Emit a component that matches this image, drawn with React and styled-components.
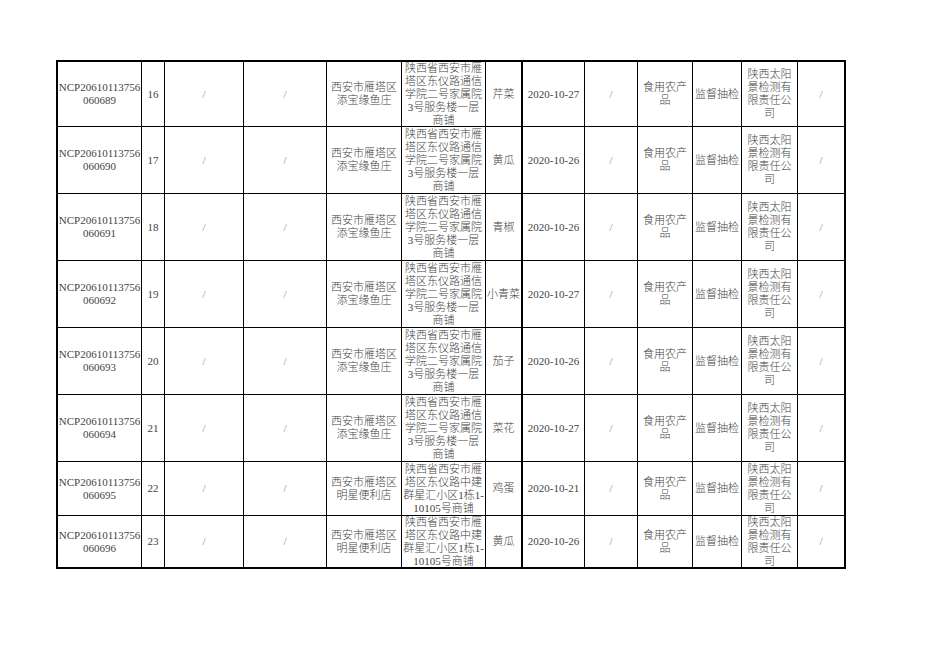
import React from 'react'
import styled, { createGlobalStyle } from 'styled-components'

const GlobalStyle = createGlobalStyle`
    html, body {
        margin: 0;
        padding: 0;
        background: #fff;
    }
`

const Page = styled.div`
    padding: 60px 0 0 56px;
    height: 662px;
    box-sizing: border-box;
    font-family: "Liberation Serif", "Noto Sans CJK SC", serif;
    font-size: 11px;
    font-weight: 300;
    color: #444;
`

const Sheet = styled.div`
    display: grid;
    grid-template-columns: 84px 23px 79px 83px 75px 84px 37px 62px 53px 55px 49px 56px 48px;
    grid-template-rows: 65px 67px 67px 67px 67px 67px 54px 53px;
    width: fit-content;
    border-top: 2px solid #000;
    border-left: 2px solid #000;
`

const Cell = styled.div`
    box-sizing: border-box;
    display: flex;
    align-items: center;
    justify-content: center;
    text-align: center;
    white-space: pre-line;
    line-height: 13px;
    padding: 0 1px;
    overflow: hidden;
    border-right: ${p => (p.$thickRight ? 2 : 1)}px solid #000;
    border-bottom: ${p => (p.$thickBottom ? 2 : 1)}px solid #000;
    color: ${p => (p.$muted ? '#8a8a8a' : 'inherit')};
`

const addrA = '陕西省西安市雁\n塔区东仪路通信\n学院二号家属院\n3号服务楼一层\n商铺'
const addrB = '陕西省西安市雁\n塔区东仪路中建\n群星汇小区1栋1-\n10105号商铺'
const shopA = '西安市雁塔区\n添宝缘鱼庄'
const shopB = '西安市雁塔区\n明星便利店'

const records = [
    { code: '060689', no: 16, shop: shopA, addr: addrA, food: '芹菜', date: '2020-10-27' },
    { code: '060690', no: 17, shop: shopA, addr: addrA, food: '黄瓜', date: '2020-10-26' },
    { code: '060691', no: 18, shop: shopA, addr: addrA, food: '青椒', date: '2020-10-26' },
    { code: '060692', no: 19, shop: shopA, addr: addrA, food: '小青菜', date: '2020-10-27' },
    { code: '060693', no: 20, shop: shopA, addr: addrA, food: '茄子', date: '2020-10-26' },
    { code: '060694', no: 21, shop: shopA, addr: addrA, food: '菜花', date: '2020-10-27' },
    { code: '060695', no: 22, shop: shopB, addr: addrB, food: '鸡蛋', date: '2020-10-21' },
    { code: '060696', no: 23, shop: shopB, addr: addrB, food: '黄瓜', date: '2020-10-26' }
]

export default function App() {
    return (
        <>
            <GlobalStyle />
            <Page>
                <Sheet>
                    {records.map((r, i) => {
                        const last = i === records.length - 1
                        const cells = [
                            { text: `NCP20610113756\n${r.code}` },
                            { text: String(r.no) },
                            { text: '/', muted: true },
                            { text: '/', muted: true },
                            { text: r.shop },
                            { text: r.addr },
                            { text: r.food, thick: true },
                            { text: r.date },
                            { text: '/', muted: true },
                            { text: '食用农产\n品' },
                            { text: '监督抽检' },
                            { text: '陕西太阳\n景检测有\n限责任公\n司' },
                            { text: '/', muted: true, thick: true }
                        ]
                        return cells.map((c, j) => (
                            <Cell
                                key={`${r.code}-${j}`}
                                $muted={c.muted}
                                $thickRight={c.thick}
                                $thickBottom={last}
                            >
                                {c.text}
                            </Cell>
                        ))
                    })}
                </Sheet>
            </Page>
        </>
    )
}
